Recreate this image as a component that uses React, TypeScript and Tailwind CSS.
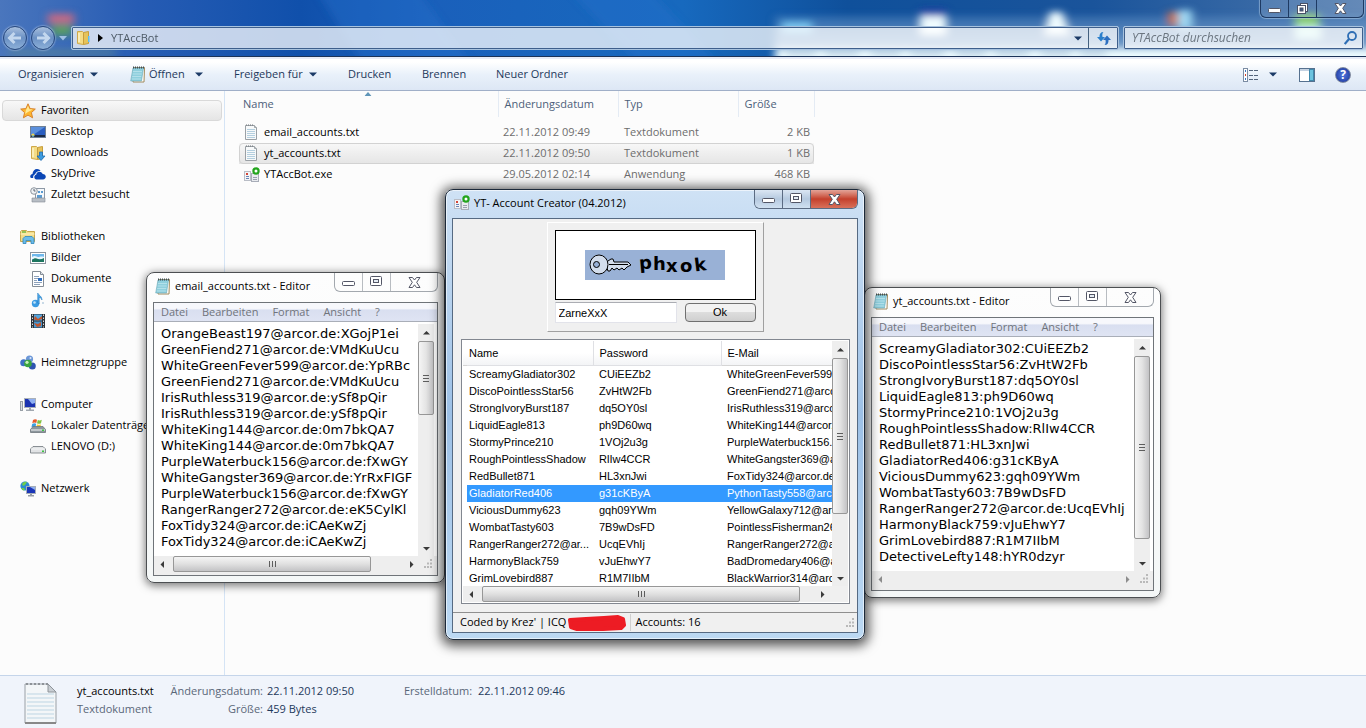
import type { ReactNode } from "react";

const ui = "font-['Open_Sans','Noto_Sans',sans-serif]";

const StarIcon = () => (
  <svg width="16" height="16" viewBox="0 0 16 16">
    <path d="M8 .8l2.1 4.8 5.2.5-3.9 3.5 1.2 5.2L8 12.1l-4.6 2.7 1.2-5.2L.7 6.1l5.2-.5z" fill="#fdb62e" stroke="#d9822b" strokeWidth="1" />
    <path d="M8 2.800l1.400 3.400 3.400.4L8 9 5 11l1-4z" fill="#ffe996" />
  </svg>
);

const DesktopIcon = () => (
  <svg width="16" height="16" viewBox="0 0 16 16">
    <rect x=".5" y="2.500" width="15" height="11" fill="#2a5ec0" stroke="#6f8095" />
    <path d="M1 3h14L3 11H1z" fill="#5a8fdc" />
    <rect x="1" y="11" width="14" height="2" fill="#1b2b45" />
    <circle cx="3" cy="11" r="1.600" fill="#f3d348" />
    <path d="M2 11.500h2v1H2z" fill="#3fb3ee" />
  </svg>
);

const FolderIcon = ({ arrow = false }: { arrow?: boolean }) => (
  <svg width="16" height="16" viewBox="0 0 16 16">
    <path d="M1.500 1.500h5l1 1v12l-6-1z" fill="#f4dc86" stroke="#cfa94a" />
    <path d="M7.500 2.500l5-1v12l-5 1z" fill="#e6c35a" stroke="#c79e3c" />
    <path d="M3 3v9" stroke="#fdf3c6" strokeWidth="1.500" />
    {arrow ? (
      <path d="M9.500 7h3v4H15l-4 4.500L7 11h2.500z" fill="#3d9be0" stroke="#1f6cae" strokeWidth=".8" />
    ) : (
      <path d="M12 6h1.500v6H12z" fill="#5bbdf0" />
    )}
  </svg>
);

const SkyDriveIcon = () => (
  <svg width="16" height="16" viewBox="0 0 16 16">
    <path d="M.2 10.800c0-1.800 1.200-2.700 2.300-2.800C2.700 5 4.600 3 7 3c1.700 0 2.900.8 3.600 2-2.600-.4-5 1-5.400 3.300C3.700 8.800 3 9.800 3.200 12 1.500 12.300.2 12 .2 10.800z" fill="#0a46b5" />
    <path d="M4.300 11c0-1.300.8-2.100 1.900-2.300.2-1.800 1.600-2.900 3.300-2.900 1.500 0 2.700.9 3.100 2.300 1.800-.1 3.200 1.100 3.200 2.700 0 1.500-1.100 2.600-2.800 2.600H6.400c-1.200 0-2.100-1-2.100-2.400z" fill="#0a46b5" />
  </svg>
);

const RecentIcon = () => (
  <svg width="16" height="16" viewBox="0 0 16 16">
    <rect x="5.500" y="1.500" width="9" height="11" fill="#f5f8fb" stroke="#8d98a5" />
    <path d="M8 4h2v2H8zM11 4h2v2h-2zM7 8h5v3H7z" fill="#5b9bd0" />
    <path d="M2 11h13v4H2z" fill="#b8bec5" stroke="#858c94" strokeWidth=".6" />
    <circle cx="4" cy="4" r="3.300" fill="#eef1f4" stroke="#8e969f" />
    <path d="M4 2v2h1.500" fill="none" stroke="#5a6570" />
  </svg>
);

const LibraryIcon = () => (
  <svg width="16" height="16" viewBox="0 0 16 16">
    <path d="M.5 2.500l1-1h5l1 1h7v10H.5z" fill="#f3dd8a" stroke="#c7a64c" />
    <path d="M2 3h4" stroke="#6cb83e" strokeWidth="1.400" />
    <path d="M.5 5h14" stroke="#fff4c2" />
    <path d="M3 14.500V9.500l2-2h7l2 2v5h-3v-3H6v3z" fill="#6cbce8" stroke="#2f86bd" strokeWidth=".8" />
  </svg>
);

const PicturesIcon = () => (
  <svg width="16" height="16" viewBox="0 0 16 16">
    <rect x=".5" y="2.500" width="15" height="11" fill="#fff" stroke="#8b949e" />
    <rect x="2" y="4" width="12" height="8" fill="#6fb8ec" />
    <path d="M2 7c3-2 5 0 6 0s4-1 6 0v2H2z" fill="#e9f5fd" />
    <path d="M2 10c2-2 4-2 6-1s4 0 6-1v4H2z" fill="#1d765f" />
  </svg>
);

const DocumentIcon = () => (
  <svg width="16" height="16" viewBox="0 0 16 16">
    <path d="M2.500.5h8l3 3v12h-11z" fill="#fff" stroke="#858d96" />
    <path d="M10.500.5v3h3" fill="#dfe4ea" stroke="#858d96" />
    <path d="M4 5.500h5M4 7.500h4M4 9.500h3M4 11.500h8M4 13.500h6" stroke="#8fa2ba" />
    <path d="M8 7h4v3H8z" fill="#2e6dbf" />
  </svg>
);

const MusicIcon = () => (
  <svg width="16" height="16" viewBox="0 0 16 16">
    <circle cx="5.500" cy="11.500" r="3.700" fill="#3a9be3" />
    <path d="M7.700 11V1c1 2.500 4.500 3 4.300 7-.8-2-2-2.300-2.800-2.500V12z" fill="#4aa6e9" stroke="#1f76bd" strokeWidth=".5" />
    <circle cx="4.500" cy="10.500" r="1.300" fill="#bfe3fa" />
    <circle cx="13" cy="11" r="1" fill="#b9cfe0" />
  </svg>
);

const VideoIcon = () => (
  <svg width="16" height="16" viewBox="0 0 16 16">
    <rect x="1" y="1" width="14" height="14" fill="#2c3238" />
    <rect x="4" y="1.500" width="8" height="6" fill="#54a4dc" />
    <rect x="4" y="8.500" width="8" height="6" fill="#4796cf" />
    <path d="M5 3l3 3 4-3v3l-4 1.500-4-1zM4 10l4 1 3-2v4l-4 1z" fill="#c2552d" />
    <path d="M2.500 1.500v13M13.500 1.500v13" stroke="#d5dade" strokeDasharray="1.500 1.500" />
  </svg>
);

const HomegroupIcon = () => (
  <svg width="16" height="16" viewBox="0 0 16 16">
    <circle cx="9.500" cy="4" r="3.600" fill="#6c97d8" />
    <circle cx="3.700" cy="7.800" r="3.500" fill="#3d6fc4" />
    <circle cx="12.300" cy="11" r="3.500" fill="#2f55b0" />
    <circle cx="8" cy="8.500" r="3.800" fill="#3aa53f" />
    <circle cx="7" cy="7.300" r="1.600" fill="#c8f0bb" />
    <circle cx="10.500" cy="3" r="1" fill="#dde9f9" />
  </svg>
);

const ComputerIcon = () => (
  <svg width="16" height="16" viewBox="0 0 16 16">
    <rect x=".5" y="4.500" width="2" height="9" fill="#dde1e5" stroke="#989fa6" />
    <rect x="4.500" y="1.500" width="11" height="9" fill="#1b33b0" stroke="#aab1b9" />
    <path d="M8 2h7v4l-3 1z" fill="#8fb0f2" />
    <path d="M9 11h2v1.500h3v1.500H6v-1.500h3z" fill="#a1a8b0" />
  </svg>
);

const DriveIcon = ({ system = false }: { system?: boolean }) => (
  <svg width="16" height="16" viewBox="0 0 16 16">
    {system && (
      <>
        <path d="M3 2q2-1.500 4-.3L6.300 5q-2-1-4 .2z" fill="#e8592a" />
        <path d="M7.800 2q2 1 4-.2L11 5.200q-2 1-4 0z" fill="#80c241" />
        <path d="M2.200 6q2-1.200 4-.2L5.500 9h-4z" fill="#3b9fe0" />
        <path d="M7 6.200q2 1 4 0L10.300 9.500h-4z" fill="#f8c930" />
      </>
    )}
    <path d={system ? "M3 8.500h10l2.500 3v3H.5v-3z" : "M3 7.500h10l2.500 2.500v4H.5v-4z"} fill={system ? "#8d979d" : "#e1e3e5"} stroke="#6e767c" strokeWidth=".8" />
    <path d={system ? "M1 12h14" : "M1 10h14"} stroke="#f5f6f7" />
    <path d="M12 11.500h2v1.500h-2z" fill="#3bc441" />
  </svg>
);

const NetworkIcon = () => (
  <svg width="16" height="16" viewBox="0 0 16 16">
    <circle cx="5" cy="5" r="4.600" fill="#2b8ad3" />
    <path d="M2 3c2-3 4-2 5-2L5 4l-2 1zM1 7l3 0 1 2-2 .5z" fill="#6fce4b" />
    <rect x="6.500" y="5.500" width="9" height="7" fill="#1b36b8" stroke="#a6aeb8" />
    <path d="M10 6h5v3z" fill="#8eaef0" />
    <path d="M10 13h2v1h2v1.500H8V14h2z" fill="#969da6" />
  </svg>
);

const TextFileIcon = () => (
  <svg width="14" height="17" viewBox="0 0 14 17">
    <path d="M1.500 1.500h9l2 2v12h-11z" fill="#f7f9fa" stroke="#9aa0a5" />
    <path d="M2 1h8" stroke="#6f757a" strokeDasharray="1 1" />
    <path d="M10.500 1.500v2h2" fill="#d7dbde" stroke="#a0a6aa" />
    <path d="M3 5.500h8M3 7.500h8M3 9.500h8M3 11.500h8M3 13.500h8" stroke="#b4cfdf" />
  </svg>
);

const NotepadIcon = () => (
  <svg width="16" height="17" viewBox="0 0 16 17">
    <path d="M3.500 1.500h11l-.5 14.500H3z" fill="#fff" stroke="#a08a5c" />
    <path d="M3 2h10.500l-2 13H.7z" fill="#8fcfdd" stroke="#6aa9b8" strokeWidth=".6" />
    <path d="M3 5.500h9M2.600 8h9M2.200 10.500h9M1.800 13h9" stroke="#b3e0ea" />
    <path d="M3 1.500h11" stroke="#3f4d55" strokeWidth="2" strokeDasharray="1 1" />
  </svg>
);

const AppIcon = () => (
  <svg width="16" height="16" viewBox="0 0 16 16">
    <rect x=".5" y="4.500" width="6" height="9" fill="#f4f4f6" stroke="#b9bdc6" />
    <path d="M2 6h2v2H2z" fill="#d44637" />
    <path d="M2 9.500h3M2 11.500h3" stroke="#6985b5" />
    <rect x="7.500" y="6.500" width="7" height="8" fill="#e9ebef" stroke="#a8adb8" />
    <path d="M9 10.500h4M9 12.500h4" stroke="#98a0ae" />
    <circle cx="12" cy="4" r="2.600" fill="#fff" stroke="#23a51d" strokeWidth="2.200" />
  </svg>
);

const Caret = () => (
  <svg width="8" height="5" viewBox="0 0 8 5">
    <path d="M0 .5h8L4 4.500z" fill="#1b3a66" />
  </svg>
);

type Direction = "up" | "down" | "left" | "right";
const arrowPaths: Record<Direction, string> = {
  up: "M0 5.500L3.500 2 7 5.500z",
  down: "M0 2h7L3.500 5.500z",
  left: "M5 0v7L1.500 3.500z",
  right: "M2 0v7l3.500-3.500z",
};

const ScrollArrow = ({ dir, dim = false }: { dir: Direction; dim?: boolean }) => (
  <button aria-label={`Scroll ${dir}`} className="flex size-4 shrink-0 items-center justify-center">
    <svg width="7" height="7" viewBox="0 0 7 7">
      <path d={arrowPaths[dir]} fill={dim ? "#8d8d8d" : "#3a3a3a"} />
    </svg>
  </button>
);

const Grip = ({ vertical = false }: { vertical?: boolean }) => (
  <span className={vertical ? "flex flex-col gap-0.5" : "flex gap-0.5"}>
    {[0, 1, 2].map((i) => (
      <span key={i} className={vertical ? "h-px w-1.5 bg-[#5d5d5d]" : "h-1.5 w-px bg-[#5d5d5d]"} />
    ))}
  </span>
);

const VScroll = ({ thumb }: { thumb: string }) => (
  <div className="flex w-4 shrink-0 flex-col bg-[#eeeeee]">
    <ScrollArrow dir="up" />
    <div className="flex-1 pt-px">
      <div className={`flex items-center justify-center rounded-xs border border-[#979797] bg-linear-to-r from-[#f5f5f5] via-[#e4e4e4] to-[#c3c3c5] ${thumb}`}>
        <Grip vertical />
      </div>
    </div>
    <ScrollArrow dir="down" />
  </div>
);

const HScroll = ({ thumb }: { thumb?: string }) => (
  <div className="flex h-4 flex-1 bg-[#eeeeee]">
    <ScrollArrow dir="left" dim={!thumb} />
    <div className="flex flex-1">
      {thumb && (
        <div className={`ml-[3px] flex items-center justify-center rounded-xs border border-[#979797] bg-linear-to-b from-[#f5f5f5] via-[#e0e0e0] to-[#c3c3c5] ${thumb}`}>
          <Grip />
        </div>
      )}
    </div>
    <ScrollArrow dir="right" dim={!thumb} />
  </div>
);

const SizeGrip = () => (
  <svg width="10" height="10" viewBox="0 0 10 10">
    <path d="M7 0h2v2H7zM4 3.500h2v2H4zM7 3.500h2v2H7zM1 7h2v2H1zM4 7h2v2H4zM7 7h2v2H7z" fill="#b9b9b9" />
  </svg>
);

const MinGlyph = () => (
  <svg width="13" height="12" viewBox="0 0 13 12">
    <rect x=".5" y="5.500" width="12" height="4" rx="1" fill="#fff" stroke="#535666" />
  </svg>
);

const MaxGlyph = () => (
  <svg width="13" height="12" viewBox="0 0 13 12">
    <rect x=".5" y=".5" width="11" height="9" rx="1" fill="#fff" stroke="#535666" />
    <rect x="3.500" y="3.500" width="5" height="3" fill="#e5ecf4" stroke="#535666" />
  </svg>
);

const RestoreGlyph = () => (
  <svg width="12" height="12" viewBox="0 0 12 12">
    <rect x="3.500" y=".5" width="7" height="8" fill="#fff" stroke="#4a5268" />
    <rect x=".5" y="2.500" width="8" height="8" fill="#fff" stroke="#4a5268" />
    <rect x="3" y="5" width="3" height="3" fill="#43608a" stroke="#4a5268" />
  </svg>
);

const CloseGlyph = () => (
  <svg width="13" height="11" viewBox="0 0 13 11">
    <path d="M1 .5h3.500l2 2.500 2-2.500H12L8.700 5.300 12 10.500H8.500l-2-2.700-2 2.700H1l3.300-5.200z" fill="#fff" stroke="#535666" />
  </svg>
);

const CaptionButtons = ({ active = false }: { active?: boolean }) => (
  <div className={`flex h-[19px] shrink-0 overflow-hidden rounded-b-md border border-t-0 ${active ? "border-[#5b6b82]" : "border-[#a3a8ae]"}`}>
    <button aria-label="Minimieren" className={`flex w-7 items-center justify-center border-r ${active ? "border-[#5b6b82] bg-linear-to-b from-[#dbe6f3] via-[#b5c9df] to-[#d0e0f0]" : "border-[#b8bcc1]"}`}>
      <MinGlyph />
    </button>
    <button aria-label="Maximieren" className={`flex w-7 items-center justify-center border-r ${active ? "border-[#5b6b82] bg-linear-to-b from-[#dbe6f3] via-[#b5c9df] to-[#d0e0f0]" : "border-[#b8bcc1]"}`}>
      <MaxGlyph />
    </button>
    <button aria-label="Schließen" className={`flex w-[46px] items-center justify-center ${active ? "bg-linear-to-b from-[#e2a398] via-[#c4402c] to-[#d9705a]" : ""}`}>
      <CloseGlyph />
    </button>
  </div>
);

const sidebar: { title: string; icon: ReactNode; selected?: boolean; items: { label: string; icon: ReactNode }[] }[] = [
  {
    title: "Favoriten",
    icon: <StarIcon />,
    selected: true,
    items: [
      { label: "Desktop", icon: <DesktopIcon /> },
      { label: "Downloads", icon: <FolderIcon arrow /> },
      { label: "SkyDrive", icon: <SkyDriveIcon /> },
      { label: "Zuletzt besucht", icon: <RecentIcon /> },
    ],
  },
  {
    title: "Bibliotheken",
    icon: <LibraryIcon />,
    items: [
      { label: "Bilder", icon: <PicturesIcon /> },
      { label: "Dokumente", icon: <DocumentIcon /> },
      { label: "Musik", icon: <MusicIcon /> },
      { label: "Videos", icon: <VideoIcon /> },
    ],
  },
  { title: "Heimnetzgruppe", icon: <HomegroupIcon />, items: [] },
  {
    title: "Computer",
    icon: <ComputerIcon />,
    items: [
      { label: "Lokaler Datenträger", icon: <DriveIcon system /> },
      { label: "LENOVO (D:)", icon: <DriveIcon /> },
    ],
  },
  { title: "Netzwerk", icon: <NetworkIcon />, items: [] },
];

const files = [
  { name: "email_accounts.txt", date: "22.11.2012 09:49", type: "Textdokument", size: "2 KB", icon: <TextFileIcon /> },
  { name: "yt_accounts.txt", date: "22.11.2012 09:50", type: "Textdokument", size: "1 KB", icon: <TextFileIcon />, selected: true },
  { name: "YTAccBot.exe", date: "29.05.2012 02:14", type: "Anwendung", size: "468 KB", icon: <AppIcon /> },
];

const emailText = `OrangeBeast197@arcor.de:XGojP1ei
GreenFiend271@arcor.de:VMdKuUcu
WhiteGreenFever599@arcor.de:YpRBc
GreenFiend271@arcor.de:VMdKuUcu
IrisRuthless319@arcor.de:ySf8pQir
IrisRuthless319@arcor.de:ySf8pQir
WhiteKing144@arcor.de:0m7bkQA7
WhiteKing144@arcor.de:0m7bkQA7
PurpleWaterbuck156@arcor.de:fXwGY
WhiteGangster369@arcor.de:YrRxFIGF
PurpleWaterbuck156@arcor.de:fXwGY
RangerRanger272@arcor.de:eK5CylKl
FoxTidy324@arcor.de:iCAeKwZj
FoxTidy324@arcor.de:iCAeKwZj`;

const ytText = `ScreamyGladiator302:CUiEEZb2
DiscoPointlessStar56:ZvHtW2Fb
StrongIvoryBurst187:dq5OY0sl
LiquidEagle813:ph9D60wq
StormyPrince210:1VOj2u3g
RoughPointlessShadow:RlIw4CCR
RedBullet871:HL3xnJwi
GladiatorRed406:g31cKByA
ViciousDummy623:gqh09YWm
WombatTasty603:7B9wDsFD
RangerRanger272@arcor.de:UcqEVhIj
HarmonyBlack759:vJuEhwY7
GrimLovebird887:R1M7IIbM
DetectiveLefty148:hYR0dzyr`;

const accounts = [
  ["ScreamyGladiator302", "CUiEEZb2", "WhiteGreenFever599."],
  ["DiscoPointlessStar56", "ZvHtW2Fb", "GreenFiend271@arco"],
  ["StrongIvoryBurst187", "dq5OY0sl", "IrisRuthless319@arco"],
  ["LiquidEagle813", "ph9D60wq", "WhiteKing144@arcor."],
  ["StormyPrince210", "1VOj2u3g", "PurpleWaterbuck156."],
  ["RoughPointlessShadow", "RlIw4CCR", "WhiteGangster369@a"],
  ["RedBullet871", "HL3xnJwi", "FoxTidy324@arcor.de"],
  ["GladiatorRed406", "g31cKByA", "PythonTasty558@arc."],
  ["ViciousDummy623", "gqh09YWm", "YellowGalaxy712@arc"],
  ["WombatTasty603", "7B9wDsFD", "PointlessFisherman26."],
  ["RangerRanger272@ar...", "UcqEVhIj", "RangerRanger272@a"],
  ["HarmonyBlack759", "vJuEhwY7", "BadDromedary406@a"],
  ["GrimLovebird887", "R1M7IIbM", "BlackWarrior314@arc"],
];

const GlassBackdrop = () => (
  <svg aria-hidden="true" className="absolute inset-0 size-full" viewBox="0 0 1366 57" preserveAspectRatio="none">
    <defs>
      <linearGradient id="sky" x1="0" x2="1" y1="0" y2="0">
        <stop offset="0" stopColor="#4a76bd" />
        <stop offset=".1" stopColor="#275cb4" />
        <stop offset=".22" stopColor="#1050ab" />
        <stop offset=".32" stopColor="#1a60bb" />
        <stop offset=".5" stopColor="#1769be" />
        <stop offset=".62" stopColor="#0f509b" />
        <stop offset=".8" stopColor="#1a549b" />
        <stop offset="1" stopColor="#4a76ac" />
      </linearGradient>
      <linearGradient id="panel" x1="0" x2="0" y1="0" y2="1">
        <stop offset="0" stopColor="#5f8fc4" stopOpacity=".4" />
        <stop offset="1" stopColor="#a9c6e2" />
      </linearGradient>
      <filter id="soft" filterUnits="userSpaceOnUse" x="-20" y="-30" width="1420" height="120">
        <feGaussianBlur stdDeviation="4" />
      </filter>
    </defs>
    <rect width="1366" height="57" fill="url(#sky)" />
    <g filter="url(#soft)">
      <path d="M310-20h100l70 97H370zM560-20h80l90 97h-80z" fill="#2a74cc" opacity=".4" />
      <path d="M48 14h26v10H48z" fill="#c66b84" />
      <path d="M52 26h20v10H52z" fill="#5aa05f" />
      <path d="M8 50h108v7H8z" fill="#5d8a92" opacity=".6" />
      <path d="M775 16h610v50H775z" fill="url(#panel)" />
      <path d="M775 50h610v24H775z" fill="#eefcff" />
      <path d="M782 22h30v12h-30z" fill="#7cc6ee" />
      <path d="M920 16h26v20h-26zM1050 12h12l8 24h-26z" fill="#effcff" />
      <path d="M920 10h26v6h-26z" fill="#2c34a8" />
      <path d="M1168 12h10v14h-10z" fill="#c9714b" />
      <path d="M1178 10h14v20h-14z" fill="#9fd7f2" />
      <path d="M1295 14h24v14h-24z" fill="#89cc72" />
      <path d="M1295 26h26v14h-26z" fill="#c5f2ef" />
    </g>
    <path d="M786 54h320" stroke="#6f91b8" strokeWidth="4" strokeDasharray="30 9 34 12" opacity=".5" filter="url(#soft)" />
  </svg>
);

const NavButtons = () => (
  <div className="flex w-[67px] shrink-0 items-center pl-px">
    {["Zurück", "Vorwärts"].map((label, i) => (
      <button key={label} aria-label={label} className="mx-0.5 flex size-6 items-center justify-center rounded-full border border-[#29497e] bg-linear-to-b from-[#a9c0de] via-[#6a90c4] to-[#8db0d8] shadow-[0_0_2px_#dfeaf8]">
        <svg width="16" height="14" viewBox="0 0 16 14" className={i ? "rotate-180" : ""}>
          <path d="M7.500 2L2.500 7l5 5M3 7h11" fill="none" stroke="#c3d7ee" strokeWidth="3" />
        </svg>
      </button>
    ))}
    <button aria-label="Zuletzt besuchte Seiten" className="ml-0.5">
      <svg width="8" height="5" viewBox="0 0 8 5">
        <path d="M0 0h8L4 4.500z" fill="#9fc0e4" />
      </svg>
    </button>
  </div>
);

const ExplorerHeader = () => (
  <header className="relative shrink-0 overflow-hidden border-b border-[#1c3358] pb-1.5">
    <GlassBackdrop />
    <div className="relative flex h-[26px] justify-end pr-0.5">
      <div className="flex h-[18px] rounded-b-md border border-t-0 border-[#1e3a63] bg-white/15 shadow-[0_0_1px_1px_rgba(190,215,240,0.5)]">
        <button aria-label="Minimieren" className="flex w-7 items-center justify-center border-r border-[#1e3a63]">
          <MinGlyph />
        </button>
        <button aria-label="Wiederherstellen" className="flex w-7 items-center justify-center border-r border-[#1e3a63]">
          <RestoreGlyph />
        </button>
        <button aria-label="Schließen" className="flex w-[46px] items-center justify-center">
          <CloseGlyph />
        </button>
      </div>
    </div>
    <div className="relative flex h-6 items-center pr-0.5">
      <NavButtons />
      <div className="ml-1 flex h-full min-w-0 flex-1 items-center rounded-xs border border-[#a8c3df] bg-white/75 pl-1 outline-1 -outline-offset-2 outline-[#3e5f8c]">
        <FolderIcon />
        <svg width="5" height="8" viewBox="0 0 5 8" className="ml-1.5">
          <path d="M0 0l5 4-5 4z" fill="#000" />
        </svg>
        <span className="ml-2 flex-1 text-[#4d5a66]">YTAccBot</span>
        <button aria-label="Verlauf" className="px-1.5">
          <Caret />
        </button>
        <button aria-label="Aktualisieren" className="flex h-full w-[30px] items-center justify-center border-l border-[#44617f]">
          <svg width="16" height="15" viewBox="0 0 16 15">
            <path d="M7.500 1C4.500 1 3.300 3 3.500 6H1l4 4.500L9 6H6.500C6 3.500 6.500 2 7.500 1z" fill="#2b7fcb" />
            <path d="M8.500 14c3 0 4.200-2 4-5H15l-4-4.500L7 9h2.500c.5 2.500 0 4-1 5z" fill="#2d6fc0" />
          </svg>
        </button>
      </div>
      <label className="ml-1 flex h-full w-[241px] items-center rounded-xs border border-[#a8c3df] bg-white/75 pr-1.5 pl-2 outline-1 -outline-offset-2 outline-[#3e5f8c]">
        <input aria-label="Suche" placeholder="YTAccBot durchsuchen" className="min-w-0 flex-1 text-xs italic outline-none placeholder:text-[#6c7680]" />
        <svg width="13" height="14" viewBox="0 0 13 14">
          <circle cx="8" cy="5" r="4" fill="none" stroke="#2f6fb5" strokeWidth="1.800" />
          <path d="M5 8l-4.300 5" stroke="#2f6fb5" strokeWidth="2.200" />
        </svg>
      </label>
    </div>
  </header>
);

const CommandBar = () => (
  <nav className="flex h-[34px] shrink-0 items-center border-t-2 border-b border-t-[#e8ecf7] border-b-[#a0afc8] bg-linear-to-b from-white from-10% via-[#e9f1fa] via-50% to-[#dde7f5] pl-[18px] text-[#1e395b]">
    <button className="flex w-28 items-center gap-1.5">Organisieren <Caret /></button>
    <button className="flex w-[104px] items-center">
      <NotepadIcon />
      <span className="mr-2.5 ml-[3px]">Öffnen</span>
      <Caret />
    </button>
    <button className="flex w-[114px] items-center gap-1.5">Freigeben für <Caret /></button>
    <button className="w-[74px] text-left">Drucken</button>
    <button className="w-[74px] text-left">Brennen</button>
    <button className="text-left">Neuer Ordner</button>
    <div className="ml-auto flex items-center pr-[15px]">
      <button aria-label="Ansicht ändern" className="flex items-center gap-2.5">
        <svg width="16" height="14" viewBox="0 0 16 14">
          <rect x=".5" y=".5" width="4" height="13" fill="#fff" stroke="#7b8ca3" />
          <path d="M2 3h1M2 11h1" stroke="#3b77c0" strokeWidth="2" />
          <path d="M2 7h1" stroke="#d2452f" strokeWidth="2" />
          <path d="M6 2.500h4M11 2.500h4M6 7.500h4M11 7.500h4M6 11.500h4M11 11.500h4" stroke="#53647a" />
        </svg>
        <Caret />
      </button>
      <button aria-label="Vorschaufenster" className="ml-[22px]">
        <svg width="16" height="14" viewBox="0 0 16 14">
          <rect x=".5" y=".5" width="15" height="13" fill="#fff" stroke="#56718f" />
          <path d="M1 2h9" stroke="#c5d2e2" strokeWidth="2" />
          <rect x="10.500" y="1.500" width="4" height="11" fill="#6cc3df" stroke="#3f88ab" />
        </svg>
      </button>
      <button aria-label="Hilfe" className="ml-5 flex size-4 items-center justify-center rounded-full border border-[#7f8aa0] bg-radial from-[#5379e0] to-[#1a2f94] text-xs font-bold text-white">
        ?
      </button>
    </div>
  </nav>
);

const Sidebar = () => (
  <aside className="w-[225px] shrink-0 border-r border-[#d5e4f5] pt-[9px]">
    {sidebar.map((group) => (
      <section key={group.title} className="mb-[21px]">
        <a href="#" className={`mx-0.5 flex h-[21px] items-center gap-[5px] rounded-sm border pl-[17px] ${group.selected ? "border-[#d9d9d9] bg-linear-to-b from-[#f8f8f8] to-[#e5e5e5]" : "border-transparent"}`}>
          {group.icon}
          {group.title}
        </a>
        {group.items.map((item) => (
          <a key={item.label} href="#" className="flex h-[21px] items-center gap-[5px] pl-[30px] whitespace-nowrap">
            {item.icon}
            {item.label}
          </a>
        ))}
      </section>
    ))}
  </aside>
);

const FileList = () => (
  <main className="min-w-0 flex-1 pl-3.5">
    <table className="w-[575px] table-fixed text-left">
      <colgroup>
        <col className="w-[259px]" />
        <col className="w-[120px]" />
        <col className="w-[120px]" />
        <col className="w-[76px]" />
      </colgroup>
      <thead className="text-[#4c607a]">
        <tr>
          <th className="relative h-[26px] border-r border-[#e4ebf4] pl-1 font-normal">
            Name
            <svg width="7" height="4" viewBox="0 0 7 4" className="absolute top-px left-1/2 -translate-x-1/2">
              <path d="M0 4l3.500-4L7 4z" fill="#5f95b8" />
            </svg>
          </th>
          <th className="border-r border-[#e4ebf4] pl-1.5 font-normal">Änderungsdatum</th>
          <th className="border-r border-[#e4ebf4] pl-1.5 font-normal">Typ</th>
          <th className="border-r border-[#e4ebf4] pl-1.5 font-normal">Größe</th>
        </tr>
        <tr>
          <td className="h-[5px]" />
        </tr>
      </thead>
      <tbody className="text-[#6d6d6d]">
        {files.map((f) => (
          <tr key={f.name} className={f.selected ? "rounded-sm bg-linear-to-b from-[#f8f8f8] to-[#e5e5e5] outline-1 -outline-offset-1 outline-[#d2d2d2]" : ""}>
            <td className="h-[21px] pl-[5px] text-black">
              <span className="flex items-center">
                <span className="flex w-5 shrink-0">{f.icon}</span>
                {f.name}
              </span>
            </td>
            <td className="pl-[5px]">{f.date}</td>
            <td className="pl-1.5">{f.type}</td>
            <td className="pr-1 text-right">{f.size}</td>
          </tr>
        ))}
      </tbody>
    </table>
  </main>
);

const DetailsPane = () => (
  <footer className="flex shrink-0 items-start border-t border-[#c5d5ea] bg-[#f0f4fb] pt-1.5 pb-1 pl-6">
    <svg width="34" height="42" viewBox="0 0 34 42">
      <path d="M1 2h23l8 8v31H1z" fill="#f3f6f8" stroke="#9aa0a6" />
      <path d="M2 2h22" stroke="#8d9297" strokeWidth="2" strokeDasharray="2 2" />
      <path d="M24 2v8h8z" fill="#c9ced3" stroke="#8e949a" />
      <path d="M3 12h27M3 16h27M3 20h27M3 24h27M3 28h27M3 32h27M3 36h27" stroke="#bdd5e3" />
      <path d="M1 41h31" stroke="#888" strokeWidth="2" />
    </svg>
    <dl className="ml-[19px] grid grid-cols-[89px_97px_141px_74px_auto] items-center leading-[18px] text-[#1e395b]">
      <dt className="text-black">yt_accounts.txt</dt>
      <dt className="text-right text-[#5a6779]">Änderungsdatum:</dt>
      <dd className="pl-1">22.11.2012 09:50</dd>
      <dt className="text-[#5a6779]">Erstelldatum:</dt>
      <dd>22.11.2012 09:46</dd>
      <dt className="text-[#5a6779]">Textdokument</dt>
      <dt className="text-right text-[#5a6779]">Größe:</dt>
      <dd className="pl-1">459 Bytes</dd>
    </dl>
  </footer>
);

type EditorProps = { title: string; text: string; place: string; vThumb: string; hThumb?: string };

const EditorWindow = ({ title, text, place, vThumb, hThumb }: EditorProps) => (
  <section className={`absolute rounded-lg border border-[#4c4f52] bg-linear-to-b from-[#fdfdfd] to-[#f4f7f7] px-1.5 pb-1.5 shadow-[0_2px_9px_1px_rgba(0,0,0,0.5)] ${place}`}>
    <div className="flex h-[29px] items-start">
      <div className="flex min-w-0 flex-1 items-center gap-1 pt-[5px] pl-0.5">
        <NotepadIcon />
        <h2>{title}</h2>
      </div>
      <CaptionButtons />
    </div>
    <div className="border border-[#6f7479] bg-white">
      <div className="flex h-[19px] items-center gap-3.5 border-b border-[#a9aeb8] bg-linear-to-b from-[#f7f8fc] from-30% via-[#d9dff0] via-40% to-[#dfe4f3] pl-[7px] text-[#70747c]">
        {["Datei", "Bearbeiten", "Format", "Ansicht", "?"].map((m) => (
          <button key={m}>{m}</button>
        ))}
      </div>
      <div className="flex pt-0.5 pr-[3px] pl-[3px]">
        <textarea
          aria-label={title}
          readOnly
          wrap="off"
          value={text}
          className="h-[232px] min-w-0 flex-1 resize-none overflow-hidden pt-0.5 pl-1 font-['DejaVu_Sans',Verdana,sans-serif] text-[13px] leading-4 outline-none"
        />
        <VScroll thumb={vThumb} />
      </div>
      <div className="flex items-center bg-[#eeeeee] pb-[3px]">
        <HScroll thumb={hThumb} />
        <div className="flex w-[18px] justify-center">
          <SizeGrip />
        </div>
      </div>
    </div>
  </section>
);

const Captcha = () => (
  <svg width="140" height="30" viewBox="0 0 140 30">
    <rect width="140" height="30" fill="#99b1d6" />
    <path d="M23 11l3-2h2l1 3h14l3 3-4 2-3 3-2-2-3 2-2-2-3 2-2-2-2 3h-2l-1-3" fill="#d3ddec" stroke="#000" />
    <ellipse cx="14" cy="14.500" rx="9" ry="9.500" fill="#d3ddec" stroke="#000" />
    <circle cx="11.500" cy="14.500" r="3" fill="#99b1d6" stroke="#000" />
    <path d="M24 14.500h19" stroke="#000" />
    <g fontFamily="DejaVu Sans, sans-serif" fontWeight="bold" fontSize="18" fill="#000">
      <text x="54" y="19" transform="rotate(-5 60 14)">p</text>
      <text x="68" y="20">h</text>
      <text x="81" y="22">x</text>
      <text x="95" y="22">o</text>
      <text x="109" y="21" transform="rotate(-7 114 14)">k</text>
    </g>
  </svg>
);

const CreatorWindow = () => (
  <section className="absolute top-[189px] left-[445px] w-[420px] rounded-lg border border-[#1d2a3a] bg-linear-to-b from-[#cfe2f5] via-[#9cc0e6] to-[#bcd9f3] px-1.5 pb-1.5 shadow-[0_2px_12px_4px_rgba(0,0,0,0.65)] inset-ring inset-ring-white/60">
    <div className="flex h-7 items-start">
      <div className="flex min-w-0 flex-1 items-center gap-1 pt-[5px] pl-0.5">
        <AppIcon />
        <h2>YT- Account Creator (04.2012)</h2>
      </div>
      <CaptionButtons active />
    </div>
    <div className="border border-[#566a82] bg-[#f0f0f0]">
      <div className="mx-auto mt-[3px] w-[217px] border border-t-white border-r-[#a0a0a0] border-b-[#a0a0a0] border-l-white px-[7px] pt-[7px] pb-2">
        <div className="flex h-[70px] items-center justify-center border border-black bg-white">
          <Captcha />
        </div>
        <form className="mt-0.5 flex items-center gap-2 font-['Liberation_Sans',Arial,sans-serif]" onSubmit={(e) => e.preventDefault()}>
          <input aria-label="Captcha" defaultValue="ZarneXxX" className="h-[21px] min-w-0 flex-1 border border-[#e2e3ea] border-t-[#abadb3] bg-white px-[3px] outline-none" />
          <button className="h-[19px] w-[71px] rounded-sm border border-[#707070] bg-linear-to-b from-[#f2f2f2] from-50% via-[#dddddd] via-50% to-[#cfcfcf]">Ok</button>
        </form>
      </div>
      <div className="mr-[7px] ml-2 mt-[7px] border border-[#828790] bg-white p-px font-['Liberation_Sans',Arial,sans-serif]">
        <div className="flex h-[245px]">
          <div className="min-w-0 flex-1 overflow-hidden">
            <table className="w-[400px] table-fixed border-collapse text-left whitespace-nowrap">
              <colgroup>
                <col className="w-[4px]" />
                <col className="w-[126px]" />
                <col className="w-[128px]" />
                <col />
              </colgroup>
              <thead className="bg-linear-to-b from-white from-50% to-[#f3f4f6]">
                <tr>
                  <td className="h-6 border-b border-[#d5d5d5]" />
                  <th className="border-r border-b border-[#dfe0e4] pl-0.5 font-normal">Name</th>
                  <th className="border-r border-b border-[#dfe0e4] pl-1.5 font-normal">Password</th>
                  <th className="border-b border-[#d5d5d5] pl-1.5 font-normal">E-Mail</th>
                </tr>
              </thead>
              <tbody>
                {accounts.map(([name, password, mail]) => {
                  const cell = name === "GladiatorRed406" ? "bg-[#3399ff] text-white" : "";
                  return (
                    <tr key={name} className="h-[17px] leading-[17px]">
                      <td />
                      <td className={`pl-0.5 ${cell}`}>{name}</td>
                      <td className={`pl-1.5 ${cell}`}>{password}</td>
                      <td className={`pl-1.5 ${cell}`}>{mail}</td>
                    </tr>
                  );
                })}
              </tbody>
            </table>
          </div>
          <VScroll thumb="h-[156px]" />
        </div>
        <div className="flex bg-[#f0f0f0]">
          <HScroll thumb="w-[318px]" />
          <div className="w-[18px]" />
        </div>
      </div>
      <div className="mt-2 flex h-5 items-center border-t border-[#8f8f8f] pl-[7px]">
        <span>Coded by Krez' | ICQ</span>
        <svg width="60" height="16" viewBox="0 0 60 16">
          <path d="M4 5l16-1 18-1 14-1 5 2 1 6-3 3-18 1-26 0-6-2z" fill="#ed1c24" stroke="#ed1c24" strokeWidth="4" strokeLinejoin="round" />
        </svg>
        <span className="ml-1 border-l border-[#d0d0d0] pl-1">Accounts: 16</span>
        <span className="mr-0.5 ml-auto">
          <SizeGrip />
        </span>
      </div>
    </div>
  </section>
);

export default function App() {
  return (
    <div className={`relative flex h-screen flex-col overflow-hidden bg-[#fcfcfc] text-[11px] text-black ${ui}`}>
      <ExplorerHeader />
      <CommandBar />
      <div className="flex min-h-0 flex-1">
        <Sidebar />
        <FileList />
      </div>
      <DetailsPane />
      <EditorWindow title="email_accounts.txt - Editor" text={emailText} place="top-[272px] left-[146px] w-[299px]" vThumb="h-[74px]" hThumb="w-[198px]" />
      <EditorWindow title="yt_accounts.txt - Editor" text={ytText} place="top-[287px] left-[864px] w-[297px]" vThumb="h-[183px]" />
      <CreatorWindow />
    </div>
  );
}
